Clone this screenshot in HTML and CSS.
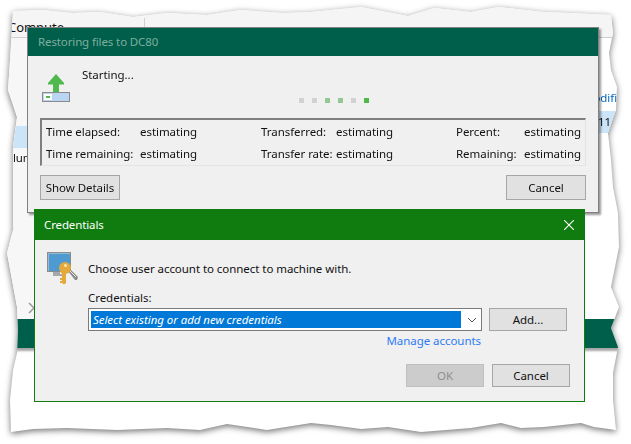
FILE: index.html
```html
<!DOCTYPE html>
<html lang="en">
<head>
<meta charset="utf-8">
<title>Restoring files</title>
<link rel="stylesheet" href="styles.css">
</head>
<body>
<div class="sheet">
  <div class="paper">
    <div class="tabs"><span class="tab">Compute</span></div>
    <div class="panes">
      <div class="pane-left">
        <div class="row-selected"></div>
        <div class="row-text">Volume</div>
        <svg class="chevron" width="8" height="12" viewBox="0 0 8 12"><path d="M1 1l5 5-5 5" fill="none" stroke="#9a9a9a" stroke-width="1.5"/></svg>
      </div>
      <div class="pane-right">
        <div class="col-link">Modified</div>
        <div class="row-selected-right">11</div>
      </div>
    </div>
    <div class="band"></div>
  </div>
</div>

<section class="win progress-win">
  <header class="win-title progress-title">Restoring files to DC80</header>
  <div class="progress-body">
    <div class="status">
      <svg class="upload-icon" width="30" height="30" viewBox="0 0 30 30">
        <path d="M15 0L23 9V10.500H18V18H12V10.500H7V9Z" fill="#4fb84f"/>
        <rect x="1.500" y="18.500" width="27" height="9" fill="#b9d5f1" stroke="#8a8a8a"/>
        <rect x="3" y="20" width="8" height="6" fill="#fff"/>
        <rect x="5" y="22" width="4" height="2" fill="#4fb84f"/>
      </svg>
      <div class="status-text">Starting...</div>
      <div class="dots">
        <i class="dot"></i><i class="dot"></i><i class="dot dot-mid"></i><i class="dot dot-mid"></i><i class="dot"></i><i class="dot dot-on"></i>
      </div>
    </div>
    <div class="stats">
      <span>Time elapsed:</span><span>estimating</span><span>Transferred:</span><span>estimating</span><span>Percent:</span><span>estimating</span>
      <span>Time remaining:</span><span>estimating</span><span>Transfer rate:</span><span>estimating</span><span>Remaining:</span><span>estimating</span>
    </div>
    <div class="progress-actions">
      <button class="btn btn-wide" type="button">Show Details</button>
      <button class="btn btn-wide" type="button">Cancel</button>
    </div>
  </div>
</section>

<section class="win cred-win">
  <header class="win-title cred-title">
    <span>Credentials</span>
    <svg class="close" width="10" height="10" viewBox="0 0 10 10"><path d="M0 0l10 10M10 0L0 10" stroke="#fff" stroke-width="1.100" fill="none"/></svg>
  </header>
  <div class="cred-body">
    <div class="cred-main">
      <svg class="cred-icon" width="32" height="33" viewBox="0 0 32 33">
        <rect x="0.500" y="0.500" width="23" height="19" fill="#4f9bd1" stroke="#8c8c8c"/>
        <path d="M1 1h22v1H2v17H1z" fill="#d8d8d8" opacity=".5"/>
        <path d="M6 20h7v2h4v2H6z" fill="#a8a8a8"/>
        <path d="M21 19l2-2 8 8-1 3h-2z" fill="#8a8a8a"/>
        <path d="M23 19l6 6" stroke="#e8e8e8" stroke-width="1"/>
        <circle cx="18" cy="16" r="6" fill="#e3a93a"/>
        <path d="M15 20h4v11l-2 1.500-2-1.500h-2v-2h2v-1h-2v-2h2z" fill="#e3a93a"/>
        <circle cx="18.500" cy="13.500" r="1.500" fill="#fbe7b6"/>
      </svg>
      <div class="cred-form">
        <p class="cred-prompt">Choose user account to connect to machine with.</p>
        <label class="cred-label">Credentials:</label>
        <div class="cred-row">
          <div class="combo">
            <span class="combo-value">Select existing or add new credentials</span>
            <svg class="combo-arrow" width="10" height="6" viewBox="0 0 10 6"><path d="M1 1l4 4 4-4" fill="none" stroke="#555" stroke-width="1"/></svg>
          </div>
          <button class="btn btn-add" type="button">Add...</button>
        </div>
        <a class="manage-link" href="#">Manage accounts</a>
      </div>
    </div>
    <div class="cred-actions">
      <button class="btn btn-disabled btn-add" type="button" disabled>OK</button>
      <button class="btn btn-add" type="button">Cancel</button>
    </div>
  </div>
</section>
</body>
</html>
```

FILE: styles.css
```css
* { box-sizing: border-box; }

html, body {
  margin: 0;
  width: 631px;
  height: 444px;
  overflow: hidden;
  background: #fff;
  font-family: "Noto Sans", "Open Sans", sans-serif;
  font-size: 11.5px;
  letter-spacing: -.05px;
  color: #111;
}

.sheet {
  position: absolute;
  inset: 0;
  filter: drop-shadow(0 2px 3px rgba(0, 0, 0, .55));
}

.paper {
  height: 444px;
  display: flex;
  flex-direction: column;
  background: #fff;
  clip-path: polygon(13px 11px, 43px 10px, 72px 13px, 100px 12px, 133px 17px, 167px 13px, 207px 15px, 240px 10px, 283px 13px, 311px 12px, 361px 7px, 408px 16px, 434px 8px, 471px 12px, 498px 7px, 544px 12px, 571px 13px, 611px 15px, 613px 33px, 609px 53px, 611px 70px, 617px 87px, 616px 110px, 608px 133px, 611px 160px, 613px 187px, 618px 213px, 619px 247px, 611px 287px, 619px 307px, 611px 328px, 618px 347px, 613px 373px, 613px 400px, 616px 430px, 594px 427px, 581px 423px, 544px 427px, 521px 428px, 501px 423px, 471px 428px, 421px 432px, 388px 427px, 361px 429px, 331px 425px, 311px 423px, 267px 430px, 227px 424px, 200px 430px, 167px 428px, 117px 430px, 67px 428px, 33px 429px, 11px 432px, 10px 400px, 13px 370px, 17px 353px, 18px 330px, 17px 307px, 7px 253px, 13px 230px, 13px 180px, 13px 147px, 17px 117px, 8px 90px, 10px 60px);
}

.tabs {
  height: 38px;
  flex: none;
  padding-top: 18px;
  background: #f5f5f5;
  border-bottom: 1px solid #cfcfcf;
}

.tab {
  display: block;
  width: 145px;
  height: 19px;
  padding-left: 8px;
  border-right: 1px solid #d0d0d0;
  line-height: 19px;
  font-size: 13px;
}

.panes {
  height: 281px;
  flex: none;
  display: flex;
  justify-content: space-between;
}

.pane-left {
  width: 34px;
  padding-top: 88px;
  background: #f7f7f7;
  overflow: hidden;
}

.row-selected { height: 22px; background: #cce4f7; }

.row-text {
  height: 20px;
  line-height: 20px;
  white-space: nowrap;
  text-indent: -6px;
  padding-left: 13px;
  direction: rtl;
}

.chevron { display: block; margin: 134px 0 0 28px; }

.pane-right { width: 35px; padding-top: 50px; }

.col-link {
  height: 23px;
  line-height: 20px;
  color: #0067c0;
  white-space: nowrap;
  overflow: hidden;
  text-indent: -13px;
  padding-left: 0;
}

.row-selected-right {
  height: 22px;
  padding-left: 2px;
  line-height: 22px;
  background: #cce4f7;
}

.band {
  height: 29px;
  flex: none;
  background: #005f4b;
  box-shadow: 0 3px 2px rgba(0, 0, 0, .35);
}

.win { position: absolute; background: #f0f0f0; }

.win-title { display: flex; align-items: center; letter-spacing: -.12px; }

.progress-win {
  left: 27px;
  top: 27px;
  width: 572px;
  height: 186px;
  border: 1px solid #808080;
  box-shadow: 2px 2px 2px rgba(0, 0, 0, .4);
}

.progress-title {
  height: 28px;
  padding: 0 0 2px 10px;
  background: #005f4b;
  color: #7fae9f;
}

.progress-body { padding: 0 12px; }

.status {
  height: 62px;
  display: flex;
  align-items: flex-start;
}

.upload-icon { flex: none; margin: 18px 0 0 1px; }

.status-text {
  width: 217px;
  flex: none;
  margin: 10px 0 0 11px;
  line-height: 18px;
}

.dots {
  display: flex;
  gap: 8px;
  margin-top: 42px;
}

.dot { width: 5px; height: 5px; background: #d2d2d2; }
.dot-mid { background: #93c893; }
.dot-on { background: #4fb848; }

.stats {
  height: 48px;
  padding: 0 0 0 4px;
  display: grid;
  grid-template-columns: 94px 121px 75px 120px 68px 1fr;
  grid-auto-rows: 22px;
  align-items: center;
  border: 1px solid #e4e4e4;
  border-top: 2px solid #7f7f7f;
  border-left: 2px solid #7f7f7f;
  white-space: nowrap;
}

.progress-actions {
  margin-top: 9px;
  display: flex;
  justify-content: space-between;
}

.btn {
  height: 23px;
  padding: 0;
  border: 1px solid #a6a6a6;
  background: #e1e1e1;
  color: #111;
  font: inherit;
  letter-spacing: inherit;
}

.btn-wide { width: 80px; height: 25px; }
.btn-add { width: 78px; }

.btn-disabled {
  background: #cccccc;
  border-color: #bfbfbf;
  color: #8f8f8f;
}

.cred-win {
  left: 34px;
  top: 209px;
  width: 551px;
  height: 193px;
  border: 1px solid #107c10;
  border-top: 0;
}

.cred-title {
  height: 31px;
  padding: 0 10px 0 9px;
  justify-content: space-between;
  background: #107c10;
  color: #fff;
}

.cred-body { padding: 0 14px 0 12px; }

.cred-main { display: flex; }

.cred-icon { flex: none; margin-top: 12px; }

.cred-form { margin: 0 0 0 9px; flex: 1; display: flex; flex-direction: column; }

.cred-prompt {
  margin: 20px 0 0;
  line-height: 18px;
}

.cred-label {
  display: block;
  margin-top: 11px;
  line-height: 18px;
}

.cred-row {
  margin-top: 1px;
  display: flex;
  gap: 7px;
}

.combo {
  width: 394px;
  height: 23px;
  padding: 2px 20px 2px 2px;
  position: relative;
  background: #fff;
  border: 1px solid #7a7a7a;
}

.combo-value {
  display: block;
  height: 17px;
  padding-left: 2px;
  line-height: 17px;
  background: #0078d7;
  color: #fff;
  font-style: italic;
  white-space: nowrap;
}

.combo-arrow { position: absolute; right: 4px; top: 8px; }

.manage-link {
  width: 393px;
  height: 19px;
  line-height: 19px;
  text-align: right;
  color: #2f7bf5;
  text-decoration: none;
}

.cred-actions {
  margin-top: 14px;
  display: flex;
  justify-content: flex-end;
  gap: 8px;
}
```
